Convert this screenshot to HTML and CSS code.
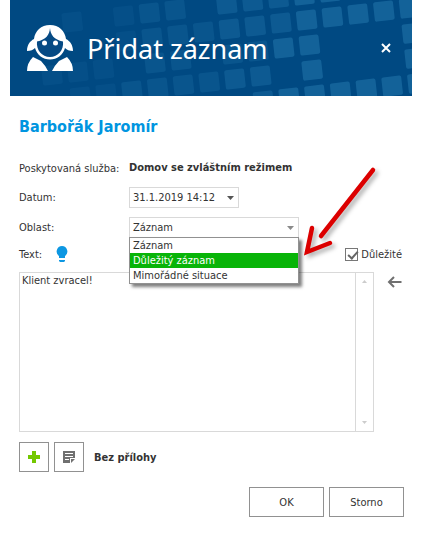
FILE: index.html
```
<!DOCTYPE html>
<html lang="cs">
<head>
<meta charset="utf-8">
<meta name="viewport" content="width=device-width, initial-scale=1">
<title>Přidat záznam</title>
<link rel="stylesheet" href="styles.css">
</head>
<body>
<form class="dialog">
  <header class="header">
    <svg class="tiles" viewBox="0 0 402 96" preserveAspectRatio="xMaxYMid slice" aria-hidden="true">
      <defs><rect id="t" x="-10" y="-10" width="20" height="20" rx="2"/></defs>
      <g fill="#15649b" transform="matrix(.99 -.115 .106 .962 216.7 4)">
        <g opacity=".25">
          <use href="#t" x="-156" y="0"/><use href="#t" x="-156" y="52"/><use href="#t" x="-130" y="52"/>
          <use href="#t" x="-182" y="52"/><use href="#t" x="-130" y="78"/><use href="#t" x="-156" y="78"/>
          <use href="#t" x="-104" y="0"/><use href="#t" x="-104" y="26"/>
        </g>
        <g opacity=".45">
          <use href="#t" x="-104" y="78"/><use href="#t" x="-78" y="0"/><use href="#t" x="-52" y="0"/>
          <use href="#t" x="-78" y="26"/><use href="#t" x="-52" y="26"/><use href="#t" x="-26" y="26"/>
          <use href="#t" x="-78" y="52"/><use href="#t" x="-52" y="52"/><use href="#t" x="-78" y="78"/>
          <use href="#t" x="-52" y="78"/><use href="#t" x="-26" y="78"/><use href="#t" x="0" y="52"/><use href="#t" x="26" y="52"/>
        </g>
        <g opacity=".65">
          <use href="#t" x="0" y="0"/><use href="#t" x="26" y="0"/><use href="#t" x="52" y="0"/>
          <use href="#t" x="0" y="26"/><use href="#t" x="26" y="26"/><use href="#t" x="52" y="26"/>
          <use href="#t" x="0" y="78"/><use href="#t" x="26" y="78"/><use href="#t" x="26" y="104"/>
        </g>
        <g opacity=".95">
          <use href="#t" x="78" y="0"/><use href="#t" x="104" y="0"/>
          <use href="#t" x="78" y="26"/><use href="#t" x="104" y="26"/><use href="#t" x="130" y="26"/>
          <use href="#t" x="156" y="26"/><use href="#t" x="182" y="26"/>
          <use href="#t" x="52" y="52"/><use href="#t" x="78" y="52"/><use href="#t" x="182" y="52"/>
          <use href="#t" x="78" y="78"/><use href="#t" x="182" y="78"/>
          <use href="#t" x="52" y="104"/><use href="#t" x="78" y="104"/><use href="#t" x="104" y="104"/>
          <use href="#t" x="130" y="104"/><use href="#t" x="156" y="104"/><use href="#t" x="182" y="104"/>
        </g>
      </g>
    </svg>
    <svg class="person" viewBox="0 0 46 46" aria-hidden="true">
      <path fill="#fff" d="M23 0C14 0 8 6 7 14C3 16 0 20 0 26C4 26 6 25 8 23C10 30 16 34.500 23 34.500S36 30 38 23C40 25 42 26 46 26C46 20 43 16 39 14C38 6 32 0 23 0Z"/>
      <path fill="#064a84" d="M23 3C22.500 10 19 14.500 10 16.500C9 25 15 32 23 32S37 25 36 16.500C27 14.500 23.500 10 23 3Z"/>
      <circle cx="17.500" cy="18" r="2.500" fill="#fff"/><circle cx="28.500" cy="18" r="2.500" fill="#fff"/>
      <path fill="#fff" d="M6 32L14 36Q18 40 21 46H0Q0 38 6 32ZM40 32L32 36Q28 40 25 46H46Q46 38 40 32Z"/>
    </svg>
    <h1 class="title">Přidat záznam</h1>
    <button class="close" type="button" aria-label="Zavřít">
      <svg width="10" height="10" viewBox="0 0 10 10"><path d="M1 1L9 9M9 1L1 9" stroke="#fff" stroke-width="2"/></svg>
    </button>
  </header>

  <main class="body">
    <h2 class="client">Barbořák Jaromír</h2>
    <div class="fields">
      <span>Poskytovaná služba:</span>
      <strong class="service">Domov se zvláštním režimem</strong>
      <label for="date">Datum:</label>
      <div class="box date">
        <input id="date" type="text" value="31.1.2019 14:12">
        <svg class="caret dark" width="7" height="4" viewBox="0 0 7 4"><path d="M0 0H7L3.500 4Z"/></svg>
      </div>
      <label for="area">Oblast:</label>
      <div class="box area">
        <select id="area"><option>Záznam</option><option>Důležitý záznam</option><option>Mimořádné situace</option></select>
        <svg class="caret" width="7" height="4" viewBox="0 0 7 4"><path d="M0 0H7L3.500 4Z"/></svg>
        <ul class="menu">
          <li>Záznam</li>
          <li class="active">Důležitý záznam</li>
          <li>Mimořádné situace</li>
        </ul>
        <svg class="arrow" width="90" height="100" viewBox="0 0 90 100" aria-hidden="true">
          <path d="M76 10L24 76M15 68L10 92L33 83" fill="none" stroke="#dc0000" stroke-width="4.500" stroke-linecap="round" stroke-linejoin="miter"/>
        </svg>
      </div>
    </div>

    <div class="text-row">
      <label for="text">Text:</label>
      <svg width="12" height="16" viewBox="0 0 12 16" aria-hidden="true"><path fill="#0d97e2" d="M6 0A5.500 5.500 0 0 1 9 10V12H3V10A5.500 5.500 0 0 1 6 0ZM3 14H9V15L8 16H4L3 15Z"/></svg>
      <label class="important"><input type="checkbox" checked>Důležité</label>
    </div>

    <div class="editor">
      <div class="text-box">
        <textarea id="text">Klient zvracel!</textarea>
        <div class="scroll" aria-hidden="true">
          <svg width="5" height="3" viewBox="0 0 5 3"><path d="M0 3L2.500 0L5 3Z"/></svg>
          <svg width="5" height="3" viewBox="0 0 5 3"><path d="M0 0H5L2.500 3Z"/></svg>
        </div>
      </div>
      <button class="back" type="button" aria-label="Vložit">
        <svg width="15" height="12" viewBox="0 0 15 12"><path d="M14.500 6H2M7 1L2 6L7 11" fill="none" stroke="#707070" stroke-width="2"/></svg>
      </button>
    </div>

    <div class="files">
      <button class="square" type="button" aria-label="Přidat přílohu">
        <svg width="12" height="12" viewBox="0 0 12 12"><path fill="#73c800" d="M4 0H8V4H12V8H8V12H4V8H0V4H4Z"/></svg>
      </button>
      <button class="square" type="button" aria-label="Poznámka">
        <svg width="12" height="12" viewBox="0 0 12 12"><path fill="#707070" d="M0 0H12V7H7V12H0Z M8 8H12L8 12Z"/><path d="M2 2.500H10M2 5.500H10M2 8.500H6" stroke="#fff"/></svg>
      </button>
      <strong>Bez přílohy</strong>
    </div>

    <footer class="actions">
      <button type="submit">OK</button>
      <button type="button">Storno</button>
    </footer>
  </main>
</form>
</body>
</html>
```
FILE: styles.css
```
* { box-sizing: border-box; }

body {
  margin: 0;
  background: #fff;
  color: #333;
  font: 11px/15px "DejaVu Sans Condensed", "DejaVu Sans", sans-serif;
}

button, input, select, textarea { font: inherit; color: inherit; }
button { padding: 0; background: #fff; border: 1px solid #919191; }
svg { display: block; flex: none; }

.dialog { margin: 0 10px; }

.header {
  position: relative;
  display: flex;
  align-items: center;
  height: 96px;
  padding: 0 20px 0 17px;
  background: #004982;
  color: #fff;
  overflow: hidden;
}
.tiles { position: absolute; inset: 0; width: 100%; height: 100%; }
.person { position: relative; width: 46px; height: 46px; }
.title {
  position: relative;
  flex: 1;
  margin: 0 0 0 14px;
  padding-top: 2px;
  font: 27px/36px "Noto Sans", sans-serif;
}
.close { position: relative; padding: 1px; background: none; border: 0; }

.body { padding: 20px 8px 16px 9px; }
.client { margin: 0; color: #0095e0; font-size: 16px; line-height: 22px; font-weight: bold; }

.fields {
  display: grid;
  grid-template-columns: 110px minmax(0, 1fr);
  row-gap: 9px;
  align-items: center;
  margin-top: 20px;
}
.service { line-height: 20px; }

.box {
  position: relative;
  display: flex;
  align-items: center;
  height: 21px;
  padding-right: 4px;
  border: 1px solid #d9d9d9;
}
.box input, .box select {
  flex: 1;
  min-width: 0;
  height: 19px;
  padding: 0 3px;
  border: 0;
  background: none;
  appearance: none;
}
.date { width: 110px; }
.area { width: 170px; }
.caret { fill: #8a8a8a; }
.dark { fill: #555; }

.menu {
  position: absolute;
  z-index: 1;
  top: 19px;
  left: -1px;
  right: -1px;
  margin: 0;
  padding: 0;
  list-style: none;
  background: #fff;
  border: 1px solid #919191;
  box-shadow: 3px 3px 3px rgba(0, 0, 0, .5);
}
.menu li { padding: 0 3px; }
.menu .active { background: #08b408; color: #fff; }

.arrow {
  position: absolute;
  z-index: 2;
  top: -58px;
  left: 167px;
  filter: drop-shadow(3px 3px 2px rgba(0, 0, 0, .3));
}

.text-row {
  display: flex;
  align-items: center;
  gap: 14px;
  height: 16px;
  margin-top: 8px;
  padding-right: 2px;
}
.important { display: flex; align-items: center; gap: 3px; margin-left: auto; }
.important input {
  width: 13px;
  height: 13px;
  margin: 0;
  border: 1px solid #777;
  appearance: none;
  background: #fff;
}
.important input:checked::before {
  content: "";
  display: block;
  width: 4px;
  height: 8px;
  margin: 0 0 0 4px;
  border: solid #666;
  border-width: 0 2px 2px 0;
  transform: rotate(42deg);
}

.editor { display: flex; align-items: flex-start; gap: 13px; margin-top: 10px; padding-right: 2px; }
.text-box { display: flex; flex: 1; min-width: 0; height: 160px; border: 1px solid #d9d9d9; }
.text-box textarea {
  flex: 1;
  min-width: 0;
  padding: 0 2px;
  border: 0;
  resize: none;
  overflow: hidden;
  outline: 0;
  background: none;
}
.scroll {
  display: flex;
  flex-direction: column;
  justify-content: space-between;
  align-items: center;
  width: 18px;
  padding: 7px 0;
  border-left: 1px solid #d9d9d9;
  fill: #ccc;
}
.back { padding: 4px 0; border: 0; background: none; }

.files { display: flex; align-items: center; gap: 5px; margin-top: 10px; }
.files strong { margin-left: 5px; }
.square { display: grid; place-items: center; width: 30px; height: 30px; }

.actions { display: flex; justify-content: flex-end; gap: 5px; margin-top: 15px; }
.actions button { width: 75px; height: 30px; }
```
